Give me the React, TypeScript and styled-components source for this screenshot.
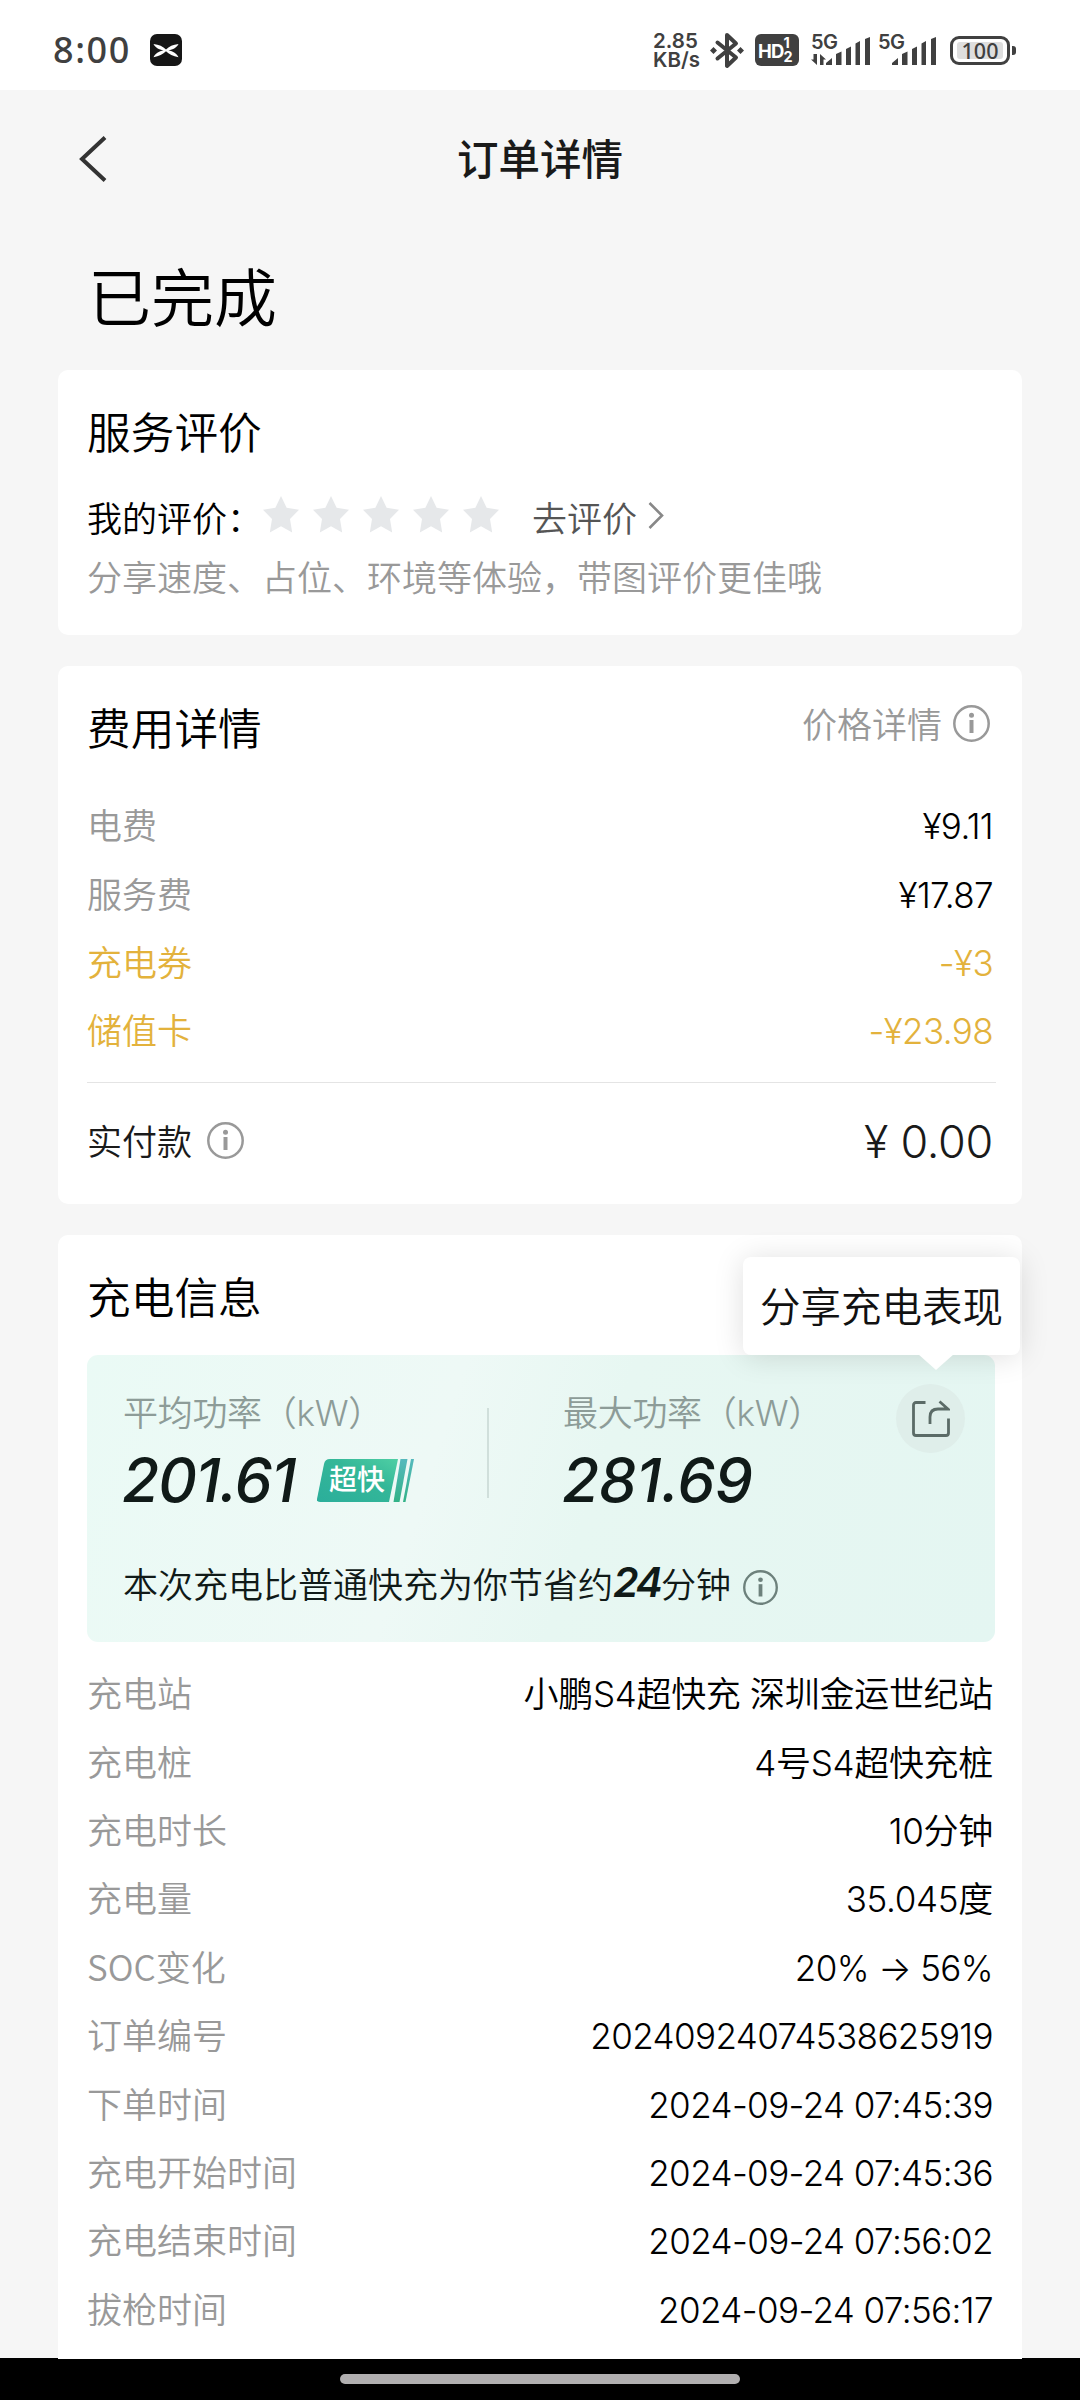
import React from "react";
import styled, { createGlobalStyle } from "styled-components";

const cjk = `"Noto Sans CJK SC", sans-serif`;
const latin = `Inter, "Noto Sans CJK SC", sans-serif`;

const GlobalStyle = createGlobalStyle`
  *, *::before, *::after { box-sizing: border-box; }
  body { margin: 0; background: #f6f6f6; }
`;

const Screen = styled.div`
  width: 1080px;
  height: 2400px;
  display: flex;
  flex-direction: column;
  overflow: hidden;
  background: #f6f6f6;
  font-family: ${cjk};
  font-weight: 350;
  color: #000;
`;

const StatusBar = styled.header`
  flex: none;
  height: 90px;
  padding: 10px 64px 0 53px;
  display: flex;
  align-items: center;
  justify-content: space-between;
  background: #fff;
  color: #404040;
`;

const StatusGroup = styled.div`
  display: flex;
  align-items: center;
`;

const Clock = styled.span`
  width: 97px;
  font: 500 36px/40px "Noto Sans", sans-serif;
  letter-spacing: 1.6px;
`;

const NetSpeed = styled.div`
  width: 57px;
  display: flex;
  flex-direction: column;
  font: 600 20.5px/19px Inter, sans-serif;
`;

const NavBar = styled.nav`
  flex: none;
  height: 138px;
  padding: 0 78px;
  display: grid;
  grid-template-columns: 30px 1fr 30px;
  align-items: center;
`;

const NavTitle = styled.h1`
  margin: 0 0 4px;
  text-align: center;
  font-size: 41.5px;
  line-height: 60px;
  font-weight: 500;
  color: #1a1a1a;
`;

const OrderState = styled.div`
  flex: none;
  height: 142px;
  padding: 21px 0 0 88px;
  font-size: 63px;
  line-height: 90px;
`;

const Cards = styled.main`
  flex: 1;
  min-height: 0;
  padding: 0 58px;
  display: flex;
  flex-direction: column;
  gap: 31px;
`;

const Card = styled.section<{ $height: number; $last?: boolean }>`
  position: relative;
  flex: none;
  height: ${(p) => p.$height}px;
  padding: 0 26px 0 29px;
  background: #fff;
  border-radius: ${(p) => (p.$last ? "10px 10px 0 0" : "10px")};
`;

const CardHead = styled.div<{ $height: number; $lift?: number }>`
  height: ${(p) => p.$height}px;
  padding-right: 6px;
  padding-bottom: ${(p) => p.$lift || 0}px;
  display: flex;
  align-items: center;
  justify-content: space-between;
`;

const CardTitle = styled.h2`
  margin: 0;
  font-size: 43.7px;
  line-height: 60px;
  font-weight: 350;
`;

const IconText = styled.span<{ $gap: number; $color: string; $lift?: number }>`
  display: inline-flex;
  align-items: center;
  gap: ${(p) => p.$gap}px;
  padding-bottom: ${(p) => p.$lift || 0}px;
  font-size: 35px;
  line-height: 50px;
  color: ${(p) => p.$color};
`;

const RatingRow = styled.div`
  display: flex;
  align-items: center;
  height: 56px;
  padding-bottom: 4px;
  font-size: 35px;
  line-height: 50px;
`;

const Stars = styled.div`
  display: flex;
  gap: 14px;
  margin: -5px 33px 0 1px;
`;

const Hint = styled.p`
  margin: 0;
  font-size: 35px;
  line-height: 58px;
  color: #999;
`;

const Row = styled.div<{ $tone?: string }>`
  height: 68.4px;
  padding-right: 3px;
  display: flex;
  align-items: center;
  justify-content: space-between;
  font-size: 35px;
  line-height: 50px;
  color: ${(p) => p.$tone || "#999"};
`;

const RowLabel = styled.span`
  margin-bottom: 4px;
`;

const Value = styled.span<{ $tone?: string; $numeric?: boolean }>`
  font-family: ${latin};
  color: ${(p) => p.$tone || "#000"};
  letter-spacing: ${(p) => (p.$numeric ? "-0.6px" : "-0.3px")};
`;

const TotalRow = styled.div`
  height: 117px;
  margin-top: 16.4px;
  padding-right: 3px;
  border-top: 1px solid #e4e4e4;
  display: flex;
  align-items: center;
  justify-content: space-between;
`;

const Total = styled.span`
  padding-top: 2px;
  font: 300 45px/60px ${latin};
  letter-spacing: -0.3px;
  color: #1a1a1a;
`;

const Panel = styled.div`
  position: relative;
  height: 287px;
  margin: 0 1px 18px 0;
  padding: 30px 30px 0 36px;
  border-radius: 11px;
  background: linear-gradient(108deg, #eafaf5 0%, #eef9f6 38%, #e7f7f2 55%, #e4f6f2 100%);
`;

const Metrics = styled.div`
  display: flex;
  align-items: flex-start;
  height: 173px;
`;

const Metric = styled.div<{ $width: number }>`
  width: ${(p) => p.$width}px;
`;

const MetricLabel = styled.div`
  font-family: ${latin};
  font-size: 35px;
  line-height: 56px;
  letter-spacing: -0.3px;
  color: #8d9c98;
`;

const MetricLine = styled.div`
  display: flex;
  align-items: center;
  gap: 22px;
  height: 78px;
`;

const MetricValue = styled.span<{ $tracking: number }>`
  margin-left: -1px;
  font: italic 500 60.5px/76px Inter, sans-serif;
  letter-spacing: ${(p) => p.$tracking}px;
  color: #101a18;
`;

const MetricDivider = styled.i`
  width: 2px;
  height: 90px;
  margin: 23px 74px 0 0;
  background: #d0dfdb;
`;

const Saving = styled.div`
  display: flex;
  align-items: center;
  height: 50px;
  font-size: 35px;
  line-height: 50px;
  color: #101a18;

  svg { margin: 9px 0 0 12px; }
`;

const SavedMinutes = styled.b`
  width: 48px;
  margin-bottom: 3px;
  font: italic 600 41px/46px Inter, sans-serif;
  letter-spacing: -2.5px;
`;

const ShareButton = styled.button`
  position: absolute;
  top: 29px;
  right: 30px;
  width: 69px;
  height: 69px;
  padding: 0 0 2px;
  border: 0;
  border-radius: 50%;
  background: #dfeeea;
  display: grid;
  place-items: center;
`;

const Tooltip = styled.div`
  position: absolute;
  z-index: 2;
  top: 22px;
  right: 2px;
  width: 277px;
  height: 98px;
  border-radius: 8px;
  background: #fff;
  box-shadow: 0 2px 30px rgba(0, 0, 0, 0.13);
  text-align: center;
  font-size: 40.5px;
  line-height: 96px;
  color: #111;

  &::after {
    content: "";
    position: absolute;
    top: 97px;
    left: 175px;
    border: 18px solid transparent;
    border-top: 16px solid #fff;
    border-bottom: 0;
  }
`;

const HomeBar = styled.footer`
  flex: none;
  height: 42px;
  display: flex;
  align-items: center;
  justify-content: center;
  background: #000;
`;

const HomePill = styled.i`
  width: 400px;
  height: 10px;
  border-radius: 5px;
  background: #b1afb0;
`;

const InfoIcon = ({ size = 37, color = "#999" }: { size?: number; color?: string }) => (
  <svg width={size} height={size} viewBox="0 0 37 37" fill="none">
    <circle cx="18.5" cy="18.5" r="17.2" stroke={color} strokeWidth="2.5" />
    <circle cx="18.5" cy="10.3" r="2.5" fill={color} />
    <path d="M18.5 15v13" stroke={color} strokeWidth="4" />
  </svg>
);

const Star = () => (
  <svg width="36" height="37" viewBox="0 0 36 37">
    <path d="M18 0l5.600 11.800L36 13.700l-9 9.300 2.200 13.500L18 30.300 6.800 36.500 9 23 0 13.700l12.400-1.900z" fill="#e6e8ea" />
  </svg>
);

const AppLogo = () => (
  <svg width="32" height="32" viewBox="0 0 32 32">
    <rect width="32" height="32" rx="7" fill="#161616" />
    <path d="M3.500 10C9 10.500 13 12.500 16 15.500 19 12.500 23 10.500 28.500 10 27 13.500 23 15.600 18.500 16.400 23 17.200 27 19.300 28.500 23.300 23 22.300 19 20.300 16 17.300 13 20.300 9 22.300 3.500 23.300 5 19.300 9 17.200 13.500 16.400 9 15.600 5 13.500 3.500 10z" fill="#fff" />
  </svg>
);

const Bluetooth = () => (
  <svg width="34" height="37" viewBox="0 0 34 37" fill="none">
    <path d="M7.500 10.500L26 25.500 17 34V3l9 8.500L7.500 26.500" stroke="#404040" strokeWidth="4" strokeLinejoin="round" strokeLinecap="round" />
    <path d="M3.500 15l3.500 3.500L3.500 22 0 18.500zM30.500 15l3.500 3.500-3.500 3.500-3.500-3.500z" fill="#404040" />
  </svg>
);

const HdBadge = styled.span`
  width: 44px;
  height: 32px;
  margin: 0 12px 0 11px;
  padding-left: 3px;
  border-radius: 6px;
  background: #404040;
  color: #fff;
  font: 700 18.5px/34px Inter, sans-serif;
  letter-spacing: -0.8px;
  display: flex;
`;

const HdDigits = styled.span`
  display: flex;
  flex-direction: column;
  padding-top: 2px;
  font-size: 14.5px;
  line-height: 14px;
`;

const SignalBox = styled.span<{ $width: number }>`
  position: relative;
  width: ${(p) => p.$width}px;
  height: 32px;
  margin-right: 7px;
  display: flex;
  justify-content: flex-end;
`;

const SignalTag = styled.span`
  position: absolute;
  left: 0;
  top: -2px;
  font: 600 20px/20px Inter, sans-serif;
  letter-spacing: -0.5px;
`;

const Bars = () => (
  <svg width="45" height="32" viewBox="0 0 45 32" fill="#404040">
    <path d="M0 31v-2l6-5v7zM10 31V20l5.500-2.500V31zM20 31V15l5-2.500V31zM29.500 31V9.500L34 7v24zM39 31V5l5-2v28z" />
  </svg>
);

const DataArrows = styled.svg`
  position: absolute;
  left: 0;
  top: 20px;
`;

const Battery = styled.span`
  width: 60px;
  height: 29px;
  margin-left: 6px;
  border: 3px solid #404040;
  border-radius: 9px;
  padding: 3px 4px;
`;

const Charge = styled.span`
  display: block;
  height: 17px;
  border-radius: 3px;
  background: #dedede;
  text-align: center;
  font: 500 21.5px/17px "Noto Sans", sans-serif;
`;

const BatteryTip = styled.i`
  width: 4px;
  height: 9px;
  margin-left: 2px;
  border-radius: 0 3px 3px 0;
  background: #404040;
`;

const SuperFast = () => (
  <svg width="97" height="43" viewBox="0 0 97 43">
    <defs>
      <linearGradient id="sf" x1="0" y1="1" x2="1" y2="0">
        <stop offset="0" stopColor="#2bae9b" />
        <stop offset="0.600" stopColor="#34b798" />
        <stop offset="1" stopColor="#4fcfa4" />
      </linearGradient>
      <linearGradient id="st" x1="0" y1="0" x2="0" y2="1">
        <stop offset="0" stopColor="#55b9bd" />
        <stop offset="1" stopColor="#32b287" />
      </linearGradient>
    </defs>
    <path d="M13 0h68l-9 43H3q-3.500 0-3-3L7 5q1-5 6-5z" fill="url(#sf)" />
    <path d="M83.500 0h7l-8 43h-6z" fill="url(#st)" />
    <path d="M94 0h3l-8.500 43H86z" fill="url(#st)" />
    <text x="12" y="31" fill="#fff" fontSize="28" fontWeight="500" fontFamily="Noto Sans CJK SC, sans-serif">超快</text>
  </svg>
);

const fees = [
  { label: "电费", value: "¥9.11" },
  { label: "服务费", value: "¥17.87" },
  { label: "充电券", value: "-¥3", tone: "#e3b23c" },
  { label: "储值卡", value: "-¥23.98", tone: "#e3b23c" },
];

const details = [
  { label: "充电站", value: "小鹏S4超快充 深圳金运世纪站" },
  { label: "充电桩", value: "4号S4超快充桩" },
  { label: "充电时长", value: "10分钟" },
  { label: "充电量", value: "35.045度" },
  { label: "SOC变化", value: "20% → 56%", numeric: true },
  { label: "订单编号", value: "20240924074538625919", numeric: true },
  { label: "下单时间", value: "2024-09-24 07:45:39", numeric: true },
  { label: "充电开始时间", value: "2024-09-24 07:45:36", numeric: true },
  { label: "充电结束时间", value: "2024-09-24 07:56:02", numeric: true },
  { label: "拔枪时间", value: "2024-09-24 07:56:17", numeric: true },
];

export default function App() {
  return (
    <Screen>
      <GlobalStyle />
      <StatusBar>
        <StatusGroup>
          <Clock>8:00</Clock>
          <AppLogo />
        </StatusGroup>
        <StatusGroup>
          <NetSpeed><span>2.85</span><span>KB/s</span></NetSpeed>
          <Bluetooth />
          <HdBadge>HD<HdDigits><span>1</span><span>2</span></HdDigits></HdBadge>
          <SignalBox $width={60}>
            <SignalTag>5G</SignalTag>
            <DataArrows width="15" height="11" viewBox="0 0 15 11">
              <path d="M0 5.500h2.500V0H6v11zM15 5.500h-2.500V11H9V0z" fill="#404040" />
            </DataArrows>
            <Bars />
          </SignalBox>
          <SignalBox $width={59}>
            <SignalTag>5G</SignalTag>
            <Bars />
          </SignalBox>
          <Battery><Charge>100</Charge></Battery>
          <BatteryTip />
        </StatusGroup>
      </StatusBar>

      <NavBar>
        <svg width="30" height="46" viewBox="0 0 30 46" fill="none">
          <path d="M27 1.500L4 23l23 21.500" stroke="#333" strokeWidth="4" />
        </svg>
        <NavTitle>订单详情</NavTitle>
      </NavBar>
      <OrderState>已完成</OrderState>

      <Cards>
        <Card $height={265}>
          <CardHead $height={121} $lift={1}><CardTitle>服务评价</CardTitle></CardHead>
          <RatingRow>
            <span>我的评价：</span>
            <Stars>{[0, 1, 2, 3, 4].map((i) => <Star key={i} />)}</Stars>
            <IconText $gap={11} $color="#555">
              去评价
              <svg width="16" height="30" viewBox="0 0 16 30" fill="none">
                <path d="M1.500 1L14 13.500 1.500 26" stroke="#888" strokeWidth="2.600" />
              </svg>
            </IconText>
          </RatingRow>
          <Hint>分享速度、占位、环境等体验，带图评价更佳哦</Hint>
        </Card>

        <Card $height={538}>
          <CardHead $height={126} $lift={7}>
            <CardTitle>费用详情</CardTitle>
            <IconText $gap={11} $color="#999" $lift={5}>价格详情<InfoIcon /></IconText>
          </CardHead>
          {fees.map((f) => (
            <Row key={f.label} $tone={f.tone}>
              <RowLabel>{f.label}</RowLabel>
              <Value $tone={f.tone} $numeric>{f.value}</Value>
            </Row>
          ))}
          <TotalRow>
            <IconText $gap={15} $color="#1a1a1a" $lift={1}>实付款<InfoIcon /></IconText>
            <Total>¥ 0.00</Total>
          </TotalRow>
        </Card>

        <Card $height={1124} $last>
          <CardHead $height={120} $lift={1}><CardTitle>充电信息</CardTitle></CardHead>
          <Tooltip>分享充电表现</Tooltip>
          <Panel>
            <Metrics>
              <Metric $width={364}>
                <MetricLabel>平均功率（kW）</MetricLabel>
                <MetricLine><MetricValue $tracking={-1.4}>201.61</MetricValue><SuperFast /></MetricLine>
              </Metric>
              <MetricDivider />
              <Metric $width={280}>
                <MetricLabel>最大功率（kW）</MetricLabel>
                <MetricLine><MetricValue $tracking={-0.5}>281.69</MetricValue></MetricLine>
              </Metric>
            </Metrics>
            <Saving>
              本次充电比普通快充为你节省约<SavedMinutes>24</SavedMinutes>分钟
              <InfoIcon size={35} color="#6d817c" />
            </Saving>
            <ShareButton aria-label="分享">
              <svg width="38" height="38" viewBox="0 0 38 38" fill="none" stroke="#5b6b67" strokeWidth="2.800">
                <path d="M13.500 3.500H4a2.500 2.500 0 0 0-2.500 2.500v28A2.500 2.500 0 0 0 4 36.500h30a2.500 2.500 0 0 0 2.500-2.500V19.500" />
                <path d="M18 25v-7q0-8 8-8h10L27.500 2.500" />
              </svg>
            </ShareButton>
          </Panel>
          {details.map((d) => (
            <Row key={d.label}>
              <RowLabel>{d.label}</RowLabel>
              <Value $numeric={d.numeric}>{d.value}</Value>
            </Row>
          ))}
        </Card>
      </Cards>
      <HomeBar><HomePill /></HomeBar>
    </Screen>
  );
}
